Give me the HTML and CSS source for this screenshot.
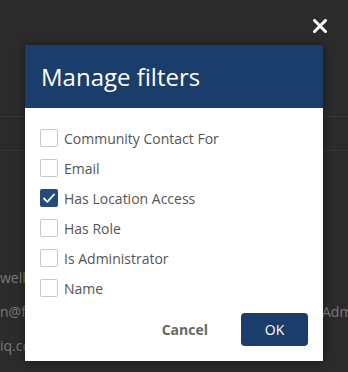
FILE: index.html
```html
<!DOCTYPE html>
<html>
<head>
    <title>Manage filters</title>
    <link rel="stylesheet" href="styles.css">
</head>
<body>

    <div class="page">
        <div class="page-row line"></div>
        <div class="page-row line"></div>
        <div class="page-list">
            <div class="page-item"><span>well</span></div>
            <div class="page-item"><span>n@foo.com</span><span class="page-right">Admin</span></div>
            <div class="page-item"><span>iq.com</span></div>
        </div>
    </div>

    <div class="overlay">
        <button class="close-btn" aria-label="Close">
            <svg width="14" height="14" viewBox="0 0 14 14">
                <path d="M1.5 1.5 L12.5 12.5 M12.5 1.5 L1.5 12.5" stroke="#fff" stroke-width="3" stroke-linecap="square"/>
            </svg>
        </button>

        <div class="modal">
            <div class="modal-header">
                <h2>Manage filters</h2>
            </div>
            <div class="modal-body">
                <label class="check"><span class="box"></span>Community Contact For</label>
                <label class="check"><span class="box"></span>Email</label>
                <label class="check"><span class="box checked">
                    <svg width="18" height="18" viewBox="0 0 18 18">
                        <path d="M4 9.5 L7.3 12.8 L14 5.5" fill="none" stroke="#fff" stroke-width="1.8" stroke-linecap="round" stroke-linejoin="round"/>
                    </svg>
                </span>Has Location Access</label>
                <label class="check"><span class="box"></span>Has Role</label>
                <label class="check"><span class="box"></span>Is Administrator</label>
                <label class="check"><span class="box"></span>Name</label>
            </div>
            <div class="modal-footer">
                <button class="cancel-btn">Cancel</button>
                <button class="ok-btn">OK</button>
            </div>
        </div>
    </div>

</body>
</html>
```

FILE: styles.css
```css
html, body {
    margin: 0;
    height: 100%;
}
body {
    font-family: "Open Sans", Arial, sans-serif;
    background-color: #2b2b2b;
    overflow: hidden;
}
.page {
    padding-top: 116px;
    height: 256px;
    overflow: hidden;
}
.page-row.line {
    height: 33px;
    border-top: 1px solid #363636;
}
.page-list {
    padding-top: 84px;
}
.page-item {
    display: flex;
    justify-content: space-between;
    height: 34px;
    font-size: 14px;
    line-height: 19px;
    color: #7a7a7a;
}
.page-right {
    width: 26px;
    overflow: hidden;
    white-space: nowrap;
}
.overlay {
    position: absolute;
    top: 0;
    left: 0;
    right: 0;
    bottom: 0;
}
.close-btn {
    position: absolute;
    top: 19px;
    right: 21px;
    padding: 0;
    border: none;
    background: none;
    line-height: 0;
    cursor: pointer;
}
.modal {
    position: absolute;
    top: 45px;
    left: 25px;
    width: 298px;
    height: 316px;
    background: #fff;
    box-shadow: 0 0 8px rgba(0,0,0,0.5);
    display: flex;
    flex-direction: column;
}
.modal-header {
    background-color: #1b3d6b;
    height: 63px;
    padding: 0 16px;
    display: flex;
    align-items: center;
}
.modal-header h2 {
    margin: 0;
    color: #fff;
    font-weight: normal;
    font-size: 24px;
}
.modal-body {
    padding: 21px 15px 0;
    display: flex;
    flex-direction: column;
    gap: 12px;
}
.check {
    display: flex;
    align-items: center;
    gap: 6px;
    height: 18px;
    font-size: 14px;
    color: #555;
}
.box {
    box-sizing: border-box;
    width: 18px;
    height: 18px;
    border: 1px solid #c8c8c8;
    border-radius: 2px;
    line-height: 0;
}
.box.checked {
    border: none;
    background-color: #234b7d;
}
.modal-footer {
    margin-top: auto;
    padding: 0 15px 15px;
    display: flex;
    justify-content: flex-end;
    align-items: center;
    gap: 33px;
}
.cancel-btn {
    border: none;
    background: none;
    padding: 0;
    font-family: inherit;
    font-size: 14px;
    font-weight: bold;
    color: #666;
    cursor: pointer;
}
.ok-btn {
    width: 67px;
    height: 33px;
    border: none;
    border-radius: 4px;
    background-color: #1b3d6b;
    color: #fff;
    font-family: inherit;
    font-size: 14px;
    cursor: pointer;
}
```
